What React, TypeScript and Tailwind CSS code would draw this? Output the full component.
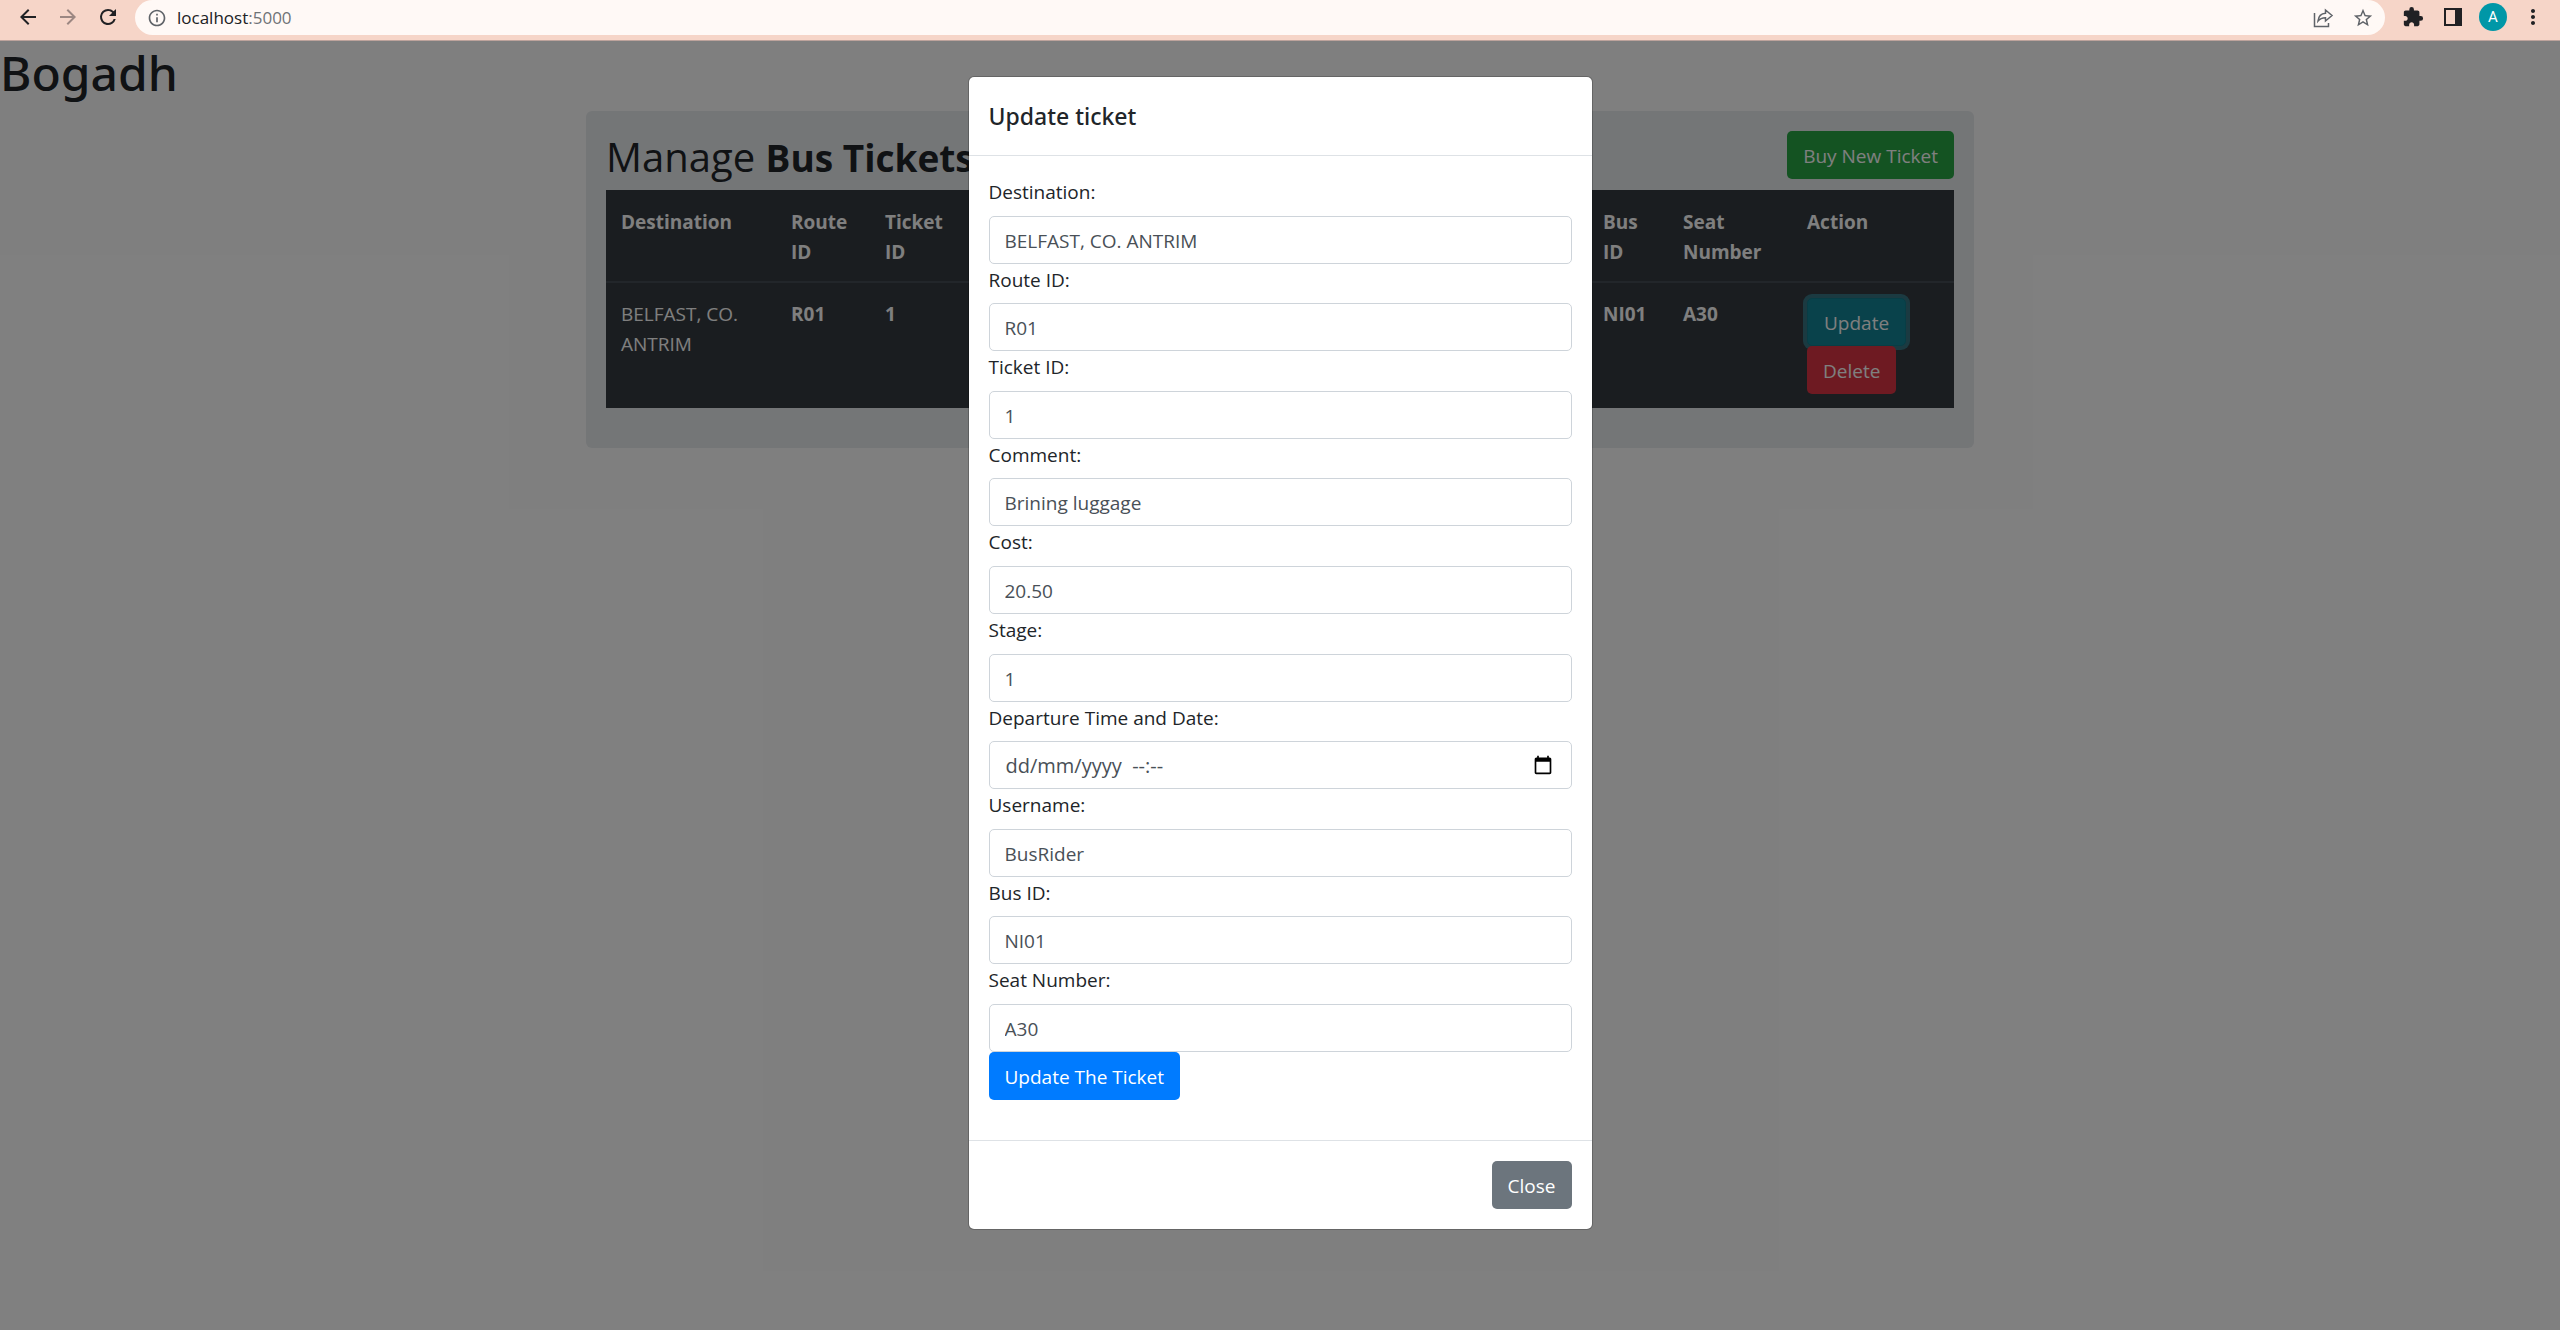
import { useId } from "react";
import type { ReactNode } from "react";
import {
  MdArrowBack,
  MdArrowForward,
  MdExtension,
  MdInfoOutline,
  MdMoreVert,
  MdStarBorder,
} from "react-icons/md";

function ToolButton({ label, children }: { label: string; children: ReactNode }) {
  return (
    <button type="button" aria-label={label} className="flex size-6 items-center justify-center">
      {children}
    </button>
  );
}

function BrowserBar() {
  return (
    <header className="flex h-[41px] items-start border-b border-[#bda39c] bg-[#f6d5c8] text-[#202124]">
      <div className="flex h-[34px] items-center gap-4 pr-[15px] pl-4">
        <ToolButton label="Back">
          <MdArrowBack className="size-6" />
        </ToolButton>
        <ToolButton label="Forward">
          <MdArrowForward className="size-6 text-[#9c8782]" />
        </ToolButton>
        <ToolButton label="Reload">
          <svg viewBox="0 0 24 24" className="size-6" fill="currentColor">
            <path d="M17.65 6.35A7.96 7.96 0 0 0 12 4a8 8 0 1 0 7.73 10h-2.08A6 6 0 1 1 12 6c1.66 0 3.14.69 4.22 1.78L13 11h7V4z" />
          </svg>
        </ToolButton>
      </div>
      <div className="flex h-[35px] flex-1 items-center rounded-full bg-[#fff9f6] pr-[10px] pl-3 text-[#5f6368]">
        <MdInfoOutline className="size-5" />
        <div
          role="textbox"
          aria-label="Address"
          className="ml-[10px] flex-1 font-['Open_Sans',sans-serif] text-[17px] leading-6 text-[#202124]"
        >
          localhost<span className="text-[#6f7377]">:5000</span>
        </div>
        <div className="flex items-center gap-4">
          <ToolButton label="Share">
            <svg viewBox="0 0 24 24" className="size-6" fill="none" stroke="currentColor" strokeWidth="1.5">
              <path d="M3.500 7v13.500h14V17" />
              <path d="M14.500 4 21 9.500l-6.500 5.500v-3.300c-3.500 0-5.500.8-7.500 3.300.5-4.500 3-7.500 7.500-7.700z" />
            </svg>
          </ToolButton>
          <ToolButton label="Bookmark">
            <MdStarBorder className="size-[22px]" />
          </ToolButton>
        </div>
      </div>
      <div className="flex h-[34px] items-center gap-[14px] pr-[15px] pl-4">
        <div className="flex gap-4">
          <ToolButton label="Extensions">
            <MdExtension className="size-[22px]" />
          </ToolButton>
          <ToolButton label="Side panel">
            <svg viewBox="0 0 24 24" className="size-6" fill="currentColor">
              <path fillRule="evenodd" d="M3 3h18v18H3zM5 5v14h9V5z" />
            </svg>
          </ToolButton>
        </div>
        <button
          type="button"
          aria-label="Profile"
          className="flex size-7 items-center justify-center rounded-full bg-[#0097a7] font-[Roboto,sans-serif] text-[15px] text-white"
        >
          A
        </button>
        <ToolButton label="Menu">
          <MdMoreVert className="size-6" />
        </ToolButton>
      </div>
    </header>
  );
}

const button = "h-12 rounded-[5px] px-4 pt-0.5 text-[19px] leading-[30px] text-white";

function TicketTable() {
  return (
    <table className="w-full table-fixed bg-[#343a40] text-left align-top text-[19px] leading-[30px] text-white">
      <colgroup>
        <col className="w-[170px]" />
        <col className="w-[94px]" />
        <col className="w-[94px]" />
        <col />
        <col className="w-[80px]" />
        <col className="w-[124px]" />
        <col className="w-[162px]" />
      </colgroup>
      <thead>
        <tr className="border-b-2 border-[#454d55] align-top">
          <th className="px-[15px] pt-[17px] pb-[14px]">Destination</th>
          <th className="pt-[17px] pr-6 pb-[14px] pl-[15px]">Route ID</th>
          <th className="pt-[17px] pr-6 pb-[14px] pl-[15px]">Ticket ID</th>
          <td />
          <th className="pt-[17px] pr-6 pb-[14px] pl-[15px]">Bus ID</th>
          <th className="px-[15px] pt-[17px] pb-[14px]">Seat Number</th>
          <th className="px-[15px] pt-[17px] pb-[14px]">Action</th>
        </tr>
      </thead>
      <tbody>
        <tr className="align-top">
          <td className="px-[15px] py-4">BELFAST, CO. ANTRIM</td>
          <td className="px-[15px] py-4 font-bold">R01</td>
          <td className="px-[15px] py-4 font-bold">1</td>
          <td />
          <td className="px-[15px] py-4 font-bold">NI01</td>
          <td className="px-[15px] py-4 font-bold">A30</td>
          <td className="px-[15px] pt-[15px] pb-[14px]">
            <div className="flex flex-col items-start">
              <button type="button" className={`${button} border border-[#117a8b] bg-[#138496] ring-4 ring-[#3ab0c3]/50`}>
                Update
              </button>
              <button type="button" className={`${button} relative bg-[#dc3545]`}>
                Delete
              </button>
            </div>
          </td>
        </tr>
      </tbody>
    </table>
  );
}

function Field({ label, value }: { label: string; value: string }) {
  const id = useId();
  return (
    <div className="flex flex-col justify-between">
      <label htmlFor={id} className="leading-8">
        {label}
      </label>
      <input
        id={id}
        defaultValue={value}
        className="h-12 w-full rounded-[5px] border border-[#ced4da] bg-white px-[15px] pt-0.5 text-[#495057]"
      />
    </div>
  );
}

function DateField({ label }: { label: string }) {
  const id = useId();
  return (
    <div className="flex flex-col justify-between">
      <label htmlFor={id} className="leading-8">
        {label}
      </label>
      <div className="flex h-12 items-center rounded-[5px] border border-[#ced4da] bg-white px-4">
        <input
          id={id}
          placeholder="dd/mm/yyyy  --:--"
          className="min-w-0 flex-1 pt-0.5 text-xl text-[#495057] placeholder:text-[#495057]"
        />
        <button type="button" aria-label="Open calendar" className="mr-[2px] text-black">
          <svg viewBox="0 0 24 24" className="size-5" fill="currentColor">
            <path d="M20 3h-1V1h-2v2H7V1H5v2H4c-1.100 0-2 .9-2 2v16c0 1.100.9 2 2 2h16c1.100 0 2-.9 2-2V5c0-1.100-.9-2-2-2zm0 18H4V8h16v13z" />
          </svg>
        </button>
      </div>
    </div>
  );
}

function UpdateDialog() {
  return (
    <div
      role="dialog"
      aria-labelledby="dialog-title"
      className="w-[625px] rounded-md border border-black/20 bg-white bg-clip-padding text-[19px] text-[#212529]"
    >
      <div className="border-b border-[#dee2e6] px-5 pt-[21px] pb-5">
        <h2 id="dialog-title" className="font-['Noto_Sans',sans-serif] text-[23px] leading-[37px] font-medium">
          Update ticket
        </h2>
      </div>
      <div className="p-5">
        <form className="mb-5">
          <div className="grid min-h-[876px] auto-rows-fr">
            <Field label="Destination:" value="BELFAST, CO. ANTRIM" />
            <Field label="Route ID:" value="R01" />
            <Field label="Ticket ID:" value="1" />
            <Field label="Comment:" value="Brining luggage" />
            <Field label="Cost:" value="20.50" />
            <Field label="Stage:" value="1" />
            <DateField label="Departure Time and Date:" />
            <Field label="Username:" value="BusRider" />
            <Field label="Bus ID:" value="NI01" />
            <Field label="Seat Number:" value="A30" />
          </div>
          <button type="button" className={`${button} block bg-[#007bff]`}>
            Update The Ticket
          </button>
        </form>
      </div>
      <div className="flex justify-end border-t border-[#dee2e6] p-5">
        <button type="button" className={`${button} bg-[#6c757d]`}>
          Close
        </button>
      </div>
    </div>
  );
}

export default function App() {
  return (
    <div className="flex min-h-screen flex-col bg-white">
      <BrowserBar />
      <main className="relative flex-1 font-['Open_Sans',sans-serif] text-[#212529]">
        <h1 className="mb-[6px] font-['Noto_Sans',sans-serif] text-5xl leading-[64px] font-medium">Bogadh</h1>
        <section className="mx-auto max-w-[1388px] rounded-md bg-[#e9ecef] px-5 pt-5 pb-10">
          <div className="mb-[6px] flex items-start justify-between">
            <h2 className="text-[40px] leading-[52px]">
              Manage <b className="text-[37px]">Bus Tickets</b>
            </h2>
            <button type="button" className={`${button} bg-[#28a745]`}>
              Buy New Ticket
            </button>
          </div>
          <TicketTable />
        </section>
        <div className="absolute inset-0 flex items-start justify-center bg-black/50 pt-[35px]">
          <UpdateDialog />
        </div>
      </main>
    </div>
  );
}
